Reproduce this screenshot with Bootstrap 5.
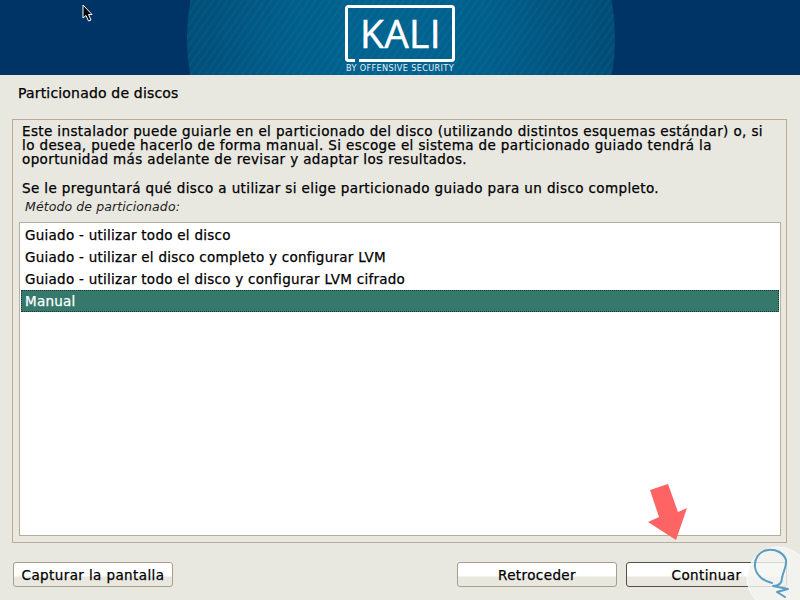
<!DOCTYPE html>
<html lang="es"><head><meta charset="utf-8"><title>Particionado de discos</title>
<link href="https://cdn.jsdelivr.net/npm/bootstrap@5.3.0/dist/css/bootstrap.min.css" rel="stylesheet">
<style>
html,body{height:100%}
body{width:800px;height:600px;overflow:hidden;background:#e8e7e0;font-family:"DejaVu Sans",sans-serif;font-size:13.5px;letter-spacing:.38px;color:#000;position:relative;-webkit-text-stroke:.25px currentColor}
.banner{height:75px;background:#003366;overflow:hidden}
.banner svg{display:block;-webkit-text-stroke:0}
.title-row{height:44px;padding:10px 0 0 18px;font-size:14px;letter-spacing:.18px;line-height:16px}
.panel{height:424px;margin:0 13px 0 12px;border:1px solid #b8ab9a;padding:4px 6px 5px 9px}
.intro{margin:0;line-height:14px;white-space:nowrap}
.gapline{height:15px}
.method{font-style:italic;font-size:12.5px;letter-spacing:.1px;margin:4px 0 0 2px;height:17px;line-height:15px;color:#222;padding-left:1px;-webkit-text-stroke:0}
.choices{height:314px;margin:6px -1px 0 -3px;background:#fff;border:1px solid #b8ab9a;padding:1px;border-radius:0}
.choice{height:22px;line-height:22px;padding-left:4px;border:0;background:transparent;font-size:13.5px;letter-spacing:.26px}
.choice.picked{background:#36796c;color:#fff;outline:1px dotted #173f38;outline-offset:-1px}
.actions{padding:19px 13px 0 13px;gap:9px}
.ibtn{height:25px;width:160px;padding:0;font-size:13.5px;letter-spacing:.4px;line-height:22px;color:#000;border:1px solid #a99e8c;border-radius:3px;background:linear-gradient(#fff 0,#fff 55%,#e8e7e0 62%,#e8e7e0 100%)}
.ibtn.dark{border-color:#554f46;width:161px}
.spacer{flex:1}
.overlay{position:absolute;left:0;top:0;pointer-events:none;-webkit-text-stroke:0}
</style></head><body>
<div class="banner"><svg width="800" height="75" viewBox="0 0 800 75">
<defs>
<pattern id="st" width="6" height="6" patternUnits="userSpaceOnUse" patternTransform="rotate(35)"><rect width="2" height="6" fill="#ffffff" opacity=".03"/></pattern>
<radialGradient id="glow" gradientUnits="userSpaceOnUse" cx="392" cy="38" r="215"><stop offset="0" stop-color="#006491"/><stop offset=".45" stop-color="#005f8c"/><stop offset=".85" stop-color="#00527c"/><stop offset="1" stop-color="#004e77"/></radialGradient>
</defs>
<rect width="800" height="75" fill="#003366"/>
<circle cx="401" cy="38" r="214" fill="url(#glow)"/>
<circle cx="401" cy="38" r="214" fill="url(#st)"/>
<path d="M355 60.500 H348 A2 2 0 0 1 346.500 58.500 V8.500 A2 2 0 0 1 348.500 6.500 H451.500 A2 2 0 0 1 453.500 8.500 V58.500 A2 2 0 0 1 451.500 60.500 H359" fill="none" stroke="#fff" stroke-width="3"/>
<text x="360" y="48" font-family="Open Sans, sans-serif" font-size="39" fill="#fff" stroke="#fff" stroke-width=".5" textLength="81" lengthAdjust="spacingAndGlyphs">KALI</text>
<text x="346" y="71" font-family="DejaVu Sans, sans-serif" font-size="8.500" fill="#e8f0f5" textLength="108" lengthAdjust="spacingAndGlyphs">BY OFFENSIVE SECURITY</text>
</svg></div>
<div class="title-row">Particionado de discos</div>
<div class="panel">
<p class="intro">Este instalador puede guiarle en el particionado del disco (utilizando distintos esquemas estándar) o, si<br>lo desea, puede hacerlo de forma manual. Si escoge el sistema de particionado guiado tendrá la<br>oportunidad más adelante de revisar y adaptar los resultados.</p>
<div class="gapline"></div>
<p class="intro">Se le preguntará qué disco a utilizar si elige particionado guiado para un disco completo.</p>
<div class="method">Método de particionado:</div>
<div class="choices list-group">
<div class="choice">Guiado - utilizar todo el disco</div>
<div class="choice">Guiado - utilizar el disco completo y configurar LVM</div>
<div class="choice">Guiado - utilizar todo el disco y configurar LVM cifrado</div>
<div class="choice picked">Manual</div>
</div>
</div>
<div class="actions d-flex">
<button class="btn ibtn" type="button">Capturar la pantalla</button>
<div class="spacer"></div>
<button class="btn ibtn" type="button">Retroceder</button>
<button class="btn ibtn dark" type="button">Continuar</button>
</div>
<svg class="overlay" width="800" height="600" viewBox="0 0 800 600">
<path d="M83 5 V18 L86 15.500 L88.500 21 L91 20 L88.500 14.500 H92 Z" fill="#000" stroke="#fff" stroke-width="1"/>
<path d="M650 490 L668 484 L678 512 L687 508 L676 540 L648 522 L659 517 Z" fill="#ff6464"/>
<circle cx="778" cy="578" r="31" fill="#f4f4f0" fill-opacity=".82" stroke="#fff" stroke-opacity=".7" stroke-width="1"/>
<path d="M785 597 L777 592 L788 589 L773 586 C780 586 782 582 782 578 C783 572 787 566 786 560 C784 553 776 549 768 550 C759 551 754 559 755 567 C756 575 763 581 772 583" fill="none" stroke="#5b9cc4" stroke-width="2" stroke-linejoin="round" stroke-linecap="round"/>
</svg>
</body></html>
